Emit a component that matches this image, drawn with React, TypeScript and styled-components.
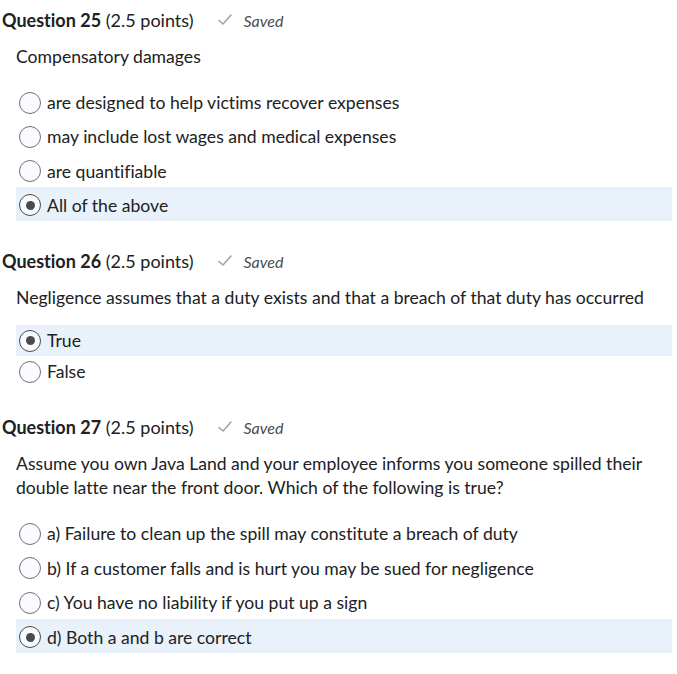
import React from "react";
import styled, { createGlobalStyle } from "styled-components";

const Global = createGlobalStyle`
  html, body { margin: 0; padding: 0; background: #ffffff; }
  body {
    font-family: Lato, "Noto Sans", sans-serif;
    color: #202122;
    font-variant-ligatures: none;
  }
`;

const Page = styled.div`
  display: flex;
  flex-direction: column;
  padding: 8px 5px 0 1px;
`;

const Question = styled.section`
  display: flex;
  flex-direction: column;
  margin-bottom: 28px;
`;

const Header = styled.div`
  display: flex;
  align-items: center;
  height: 24px;
  padding-left: 1px;
`;

const Title = styled.h2`
  margin: 0;
  font-size: 18px;
  font-weight: 400;
  line-height: 24px;
  color: #202122;
  strong { font-weight: 700; }
`;

const Status = styled.span`
  display: flex;
  align-items: center;
  gap: 10px;
  margin-left: 24px;
  font-size: 16px;
  font-style: italic;
  color: #494c4e;
`;

const Prompt = styled.p<{ $after: number }>`
  margin: 13px 0 ${(p) => p.$after}px 15px;
  font-size: 17.6px;
  line-height: 24px;
  color: #202122;
`;

const Options = styled.div`
  display: flex;
  flex-direction: column;
  margin-left: 15px;
`;

const Option = styled.label<{ $selected?: boolean; $h: number; $shift: number }>`
  box-sizing: border-box;
  display: flex;
  align-items: center;
  gap: 6px;
  height: ${(p) => p.$h}px;
  padding: ${(p) => p.$shift}px 0 0 3px;
  font-size: 17.6px;
  color: #202122;
  background: ${(p) => (p.$selected ? "#e9f1fb" : "transparent")};
`;

const Radio = styled.span<{ $checked?: boolean }>`
  box-sizing: border-box;
  width: 22px;
  height: 22px;
  border-radius: 50%;
  border: ${(p) => (p.$checked ? "1.5px solid #494c4e" : "1px solid #6e7376")};
  background: #f9fbff;
  display: flex;
  align-items: center;
  justify-content: center;
  flex-shrink: 0;
  &::after {
    content: "";
    display: ${(p) => (p.$checked ? "block" : "none")};
    width: 9px;
    height: 9px;
    border-radius: 50%;
    background: #494c4e;
  }
`;

const Check = () => (
  <svg width="16" height="14" viewBox="0 0 16 14" fill="none">
    <path d="M2 7.5 L6 11 L14 2" stroke="#9ea4a7" strokeWidth="1.6" strokeLinecap="round" strokeLinejoin="round" />
  </svg>
);

type Q = {
  num: number;
  prompt: React.ReactNode;
  options: string[];
  selected: number;
  rowH: number;
  shift: number;
  after: number;
};

const questions: Q[] = [
  {
    num: 25,
    prompt: "Compensatory damages",
    options: [
      "are designed to help victims recover expenses",
      "may include lost wages and medical expenses",
      "are quantifiable",
      "All of the above",
    ],
    selected: 3,
    rowH: 34.25,
    shift: 3,
    after: 15,
  },
  {
    num: 26,
    prompt: "Negligence assumes that a duty exists and that a breach of that duty has occurred",
    options: ["True", "False"],
    selected: 0,
    rowH: 31,
    shift: 0,
    after: 15,
  },
  {
    num: 27,
    prompt: (
      <>
        Assume you own Java Land and your employee informs you someone spilled their
        <br />
        double latte near the front door. Which of the following is true?
      </>
    ),
    options: [
      "a) Failure to clean up the spill may constitute a breach of duty",
      "b) If a customer falls and is hurt you may be sued for negligence",
      "c) You have no liability if you put up a sign",
      "d) Both a and b are correct",
    ],
    selected: 3,
    rowH: 34.5,
    shift: 3,
    after: 15,
  },
];

export default function App() {
  return (
    <>
      <Global />
      <Page>
        {questions.map((q) => (
          <Question key={q.num}>
            <Header>
              <Title>
                <strong>Question {q.num}</strong> (2.5 points)
              </Title>
              <Status>
                <Check />
                Saved
              </Status>
            </Header>
            <Prompt $after={q.after}>{q.prompt}</Prompt>
            <Options>
              {q.options.map((o, i) => (
                <Option key={i} $selected={i === q.selected} $h={q.rowH} $shift={q.shift}>
                  <Radio $checked={i === q.selected} />
                  {o}
                </Option>
              ))}
            </Options>
          </Question>
        ))}
      </Page>
    </>
  );
}
